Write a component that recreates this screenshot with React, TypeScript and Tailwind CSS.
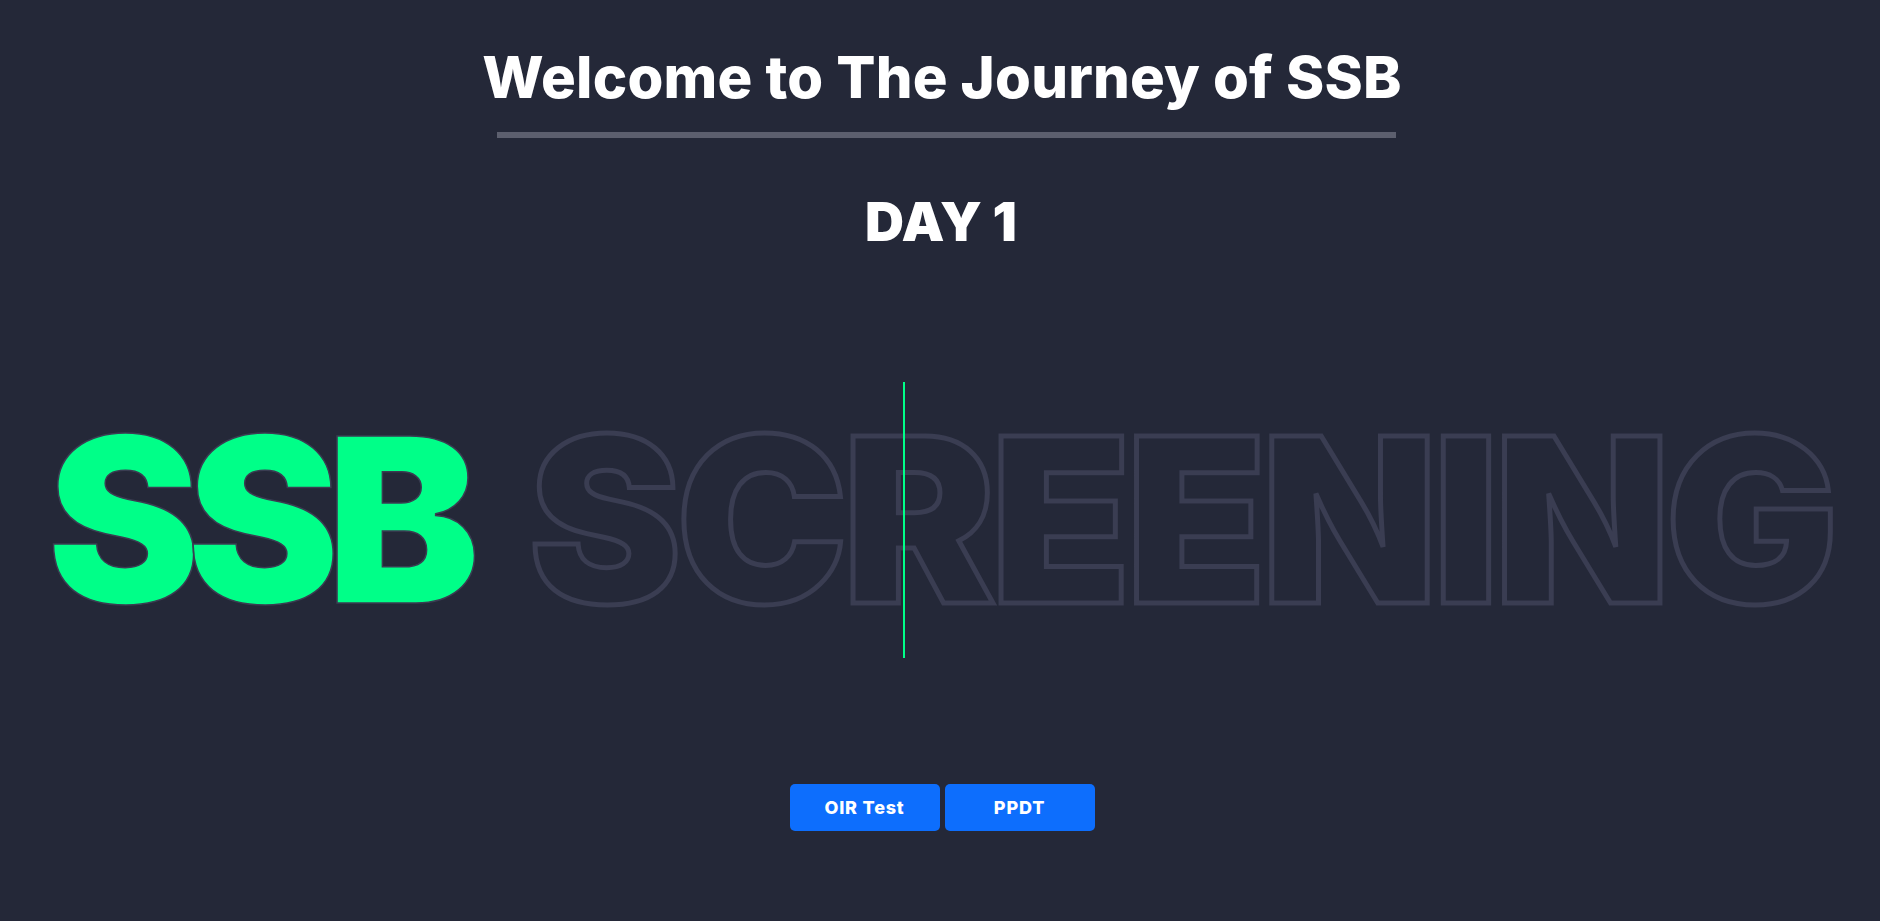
export default function App() {
  return (
    <div className="flex min-h-screen flex-col items-center bg-[#242838] font-['Inter',sans-serif] text-white">
      <h1 className="ml-[4px] mt-[48px] text-[58px] font-extrabold leading-none tracking-[0.2px]">
        Welcome to The Journey of SSB
      </h1>
      <div className="ml-[12px] mt-[26px] h-[6px] w-[899px] bg-[#5c5f6e]" />

      <h2 className="ml-[2px] mt-[57px] text-[54px] font-black leading-none">DAY 1</h2>

      <div className="relative mt-[155px] flex w-full justify-center">
        <p className="flex gap-[62px] text-[230px] font-black leading-none">
          <span className="tracking-[-13.5px] text-[#00ff88] [-webkit-text-stroke:1.5px_#3a3d52]">SSB</span>
          <span className="tracking-[-5.6px] text-transparent [-webkit-text-stroke:5px_#3a3d52]">SCREENING</span>
        </p>
        <div className="absolute left-[903px] top-[-22px] h-[276px] w-[2px] bg-[#00ff88]" />
      </div>

      <div className="ml-[4px] mt-[150px] flex gap-[5px]">
        <button className="h-[47px] w-[150px] rounded-[5px] bg-[#0d6efd] text-[18px] font-extrabold tracking-[0.8px]">
          OIR Test
        </button>
        <button className="h-[47px] w-[150px] rounded-[5px] bg-[#0d6efd] text-[18px] font-extrabold tracking-[0.8px]">
          PPDT
        </button>
      </div>
    </div>
  );
}
